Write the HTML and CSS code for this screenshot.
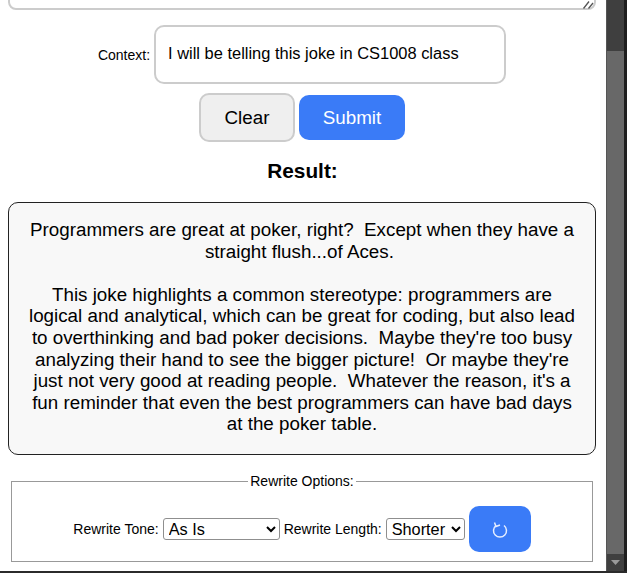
FILE: index.html
```html
<!DOCTYPE html>
<html lang="en">
<head>
<meta charset="utf-8">
<title>Joke Rewriter</title>
<link rel="stylesheet" href="styles.css">
</head>
<body>
<div class="window">
  <main class="page">
    <div class="prompt-wrap">
      <textarea class="prompt" aria-label="Prompt"></textarea>
      <svg class="grip" width="12" height="10" viewBox="0 0 12 10" aria-hidden="true"><path d="M1.500 9.500L7 2.500M6.500 9.500L11 4" fill="none" stroke="#555" stroke-width="1.300"/></svg>
    </div>
    <div class="context-row">
      <label class="label" for="ctx">Context:</label>
      <input id="ctx" class="context" type="text" value="I will be telling this joke in CS1008 class">
    </div>
    <div class="actions">
      <button class="btn btn-clear" type="button">Clear</button>
      <button class="btn btn-submit" type="button">Submit</button>
    </div>
    <h2 class="result-title">Result:</h2>
    <div class="result">Programmers are great at poker, right?  Except when they have a straight flush...of Aces. 

This joke highlights a common stereotype: programmers are logical and analytical, which can be great for coding, but also lead to overthinking and bad poker decisions.  Maybe they're too busy analyzing their hand to see the bigger picture!  Or maybe they're just not very good at reading people.  Whatever the reason, it's a fun reminder that even the best programmers can have bad days at the poker table.</div>
    <fieldset class="options">
      <legend class="legend">Rewrite Options:</legend>
      <div class="options-row">
        <label class="label" for="tone">Rewrite Tone:</label>
        <select id="tone" class="select tone"><option>As Is</option><option>More Formal</option></select>
        <label class="label" for="len">Rewrite Length:</label>
        <select id="len" class="select length"><option>Shorter</option><option>Longer</option></select>
        <button class="btn-redo" type="button" aria-label="Rewrite">
          <svg width="18" height="18" viewBox="0 0 18 18" aria-hidden="true"><path d="M5 5.500A6.500 6.500 0 1 0 13 5.500M3.500 2.500L5 6.500L9 5" fill="none" stroke="#e6eeff" stroke-width="1.500"/></svg>
        </button>
      </div>
    </fieldset>
  </main>
  <div class="scrollbar" aria-hidden="true">
    <div class="track"><div class="thumb"></div></div>
    <svg class="arrow" width="17" height="17" viewBox="0 0 17 17"><path d="M4 6h9l-4.500 5z" fill="#9a9a9a"/></svg>
  </div>
  <div class="edge"></div>
</div>
<div class="bottom-edge"></div>
</body>
</html>
```
FILE: styles.css
```css
* { box-sizing: border-box; }
html, body { margin: 0; height: 100%; overflow: hidden; background: #fff; }
body { display: flex; flex-direction: column; font-family: "Liberation Sans", Arial, sans-serif; color: #000; }
.window { flex: 1; min-height: 0; display: flex; }
.bottom-edge { height: 2px; background: #2b2b2b; }
.page { width: 606px; flex: none; overflow: hidden; display: flex; flex-direction: column; align-items: center; }
.prompt-wrap { position: relative; width: 588px; height: 60px; margin: -50px 0 0 -2px; flex: none; }
.prompt { display: block; width: 100%; height: 100%; border: 2px solid #ccc; border-radius: 8px; background: #fff; resize: none; }
.grip { position: absolute; right: 2px; bottom: 1px; }
.context-row { display: flex; align-items: center; gap: 4px; margin: 15px 0 0 -2px; }
.label { font-size: 14px; }
.context { width: 352px; height: 59px; padding: 0 12px 2px; border: 2px solid #ccc; border-radius: 10px; font: 16.45px "Liberation Sans", Arial, sans-serif; color: #000; background: #fff; }
.actions { display: flex; align-items: center; gap: 4px; margin: 9px 0 0 -2px; }
.btn { font: 18.8px "Liberation Sans", Arial, sans-serif; border-radius: 10px; cursor: pointer; }
.btn-clear { width: 96px; height: 49px; background: #efefef; border: 2px solid #ccc; color: #000; }
.btn-submit { width: 106px; height: 45px; background: #3a7bf7; border: 0; color: #fff; }
.result-title { font-size: 20.8px; line-height: 24px; font-weight: bold; margin: 17px 0 0 -1px; }
.result { width: 588px; height: 253px; margin: 19px 0 0 -2px; padding: 16px 16px; border: 1px solid #222; border-radius: 10px; background: #f8f8f8; font-size: 18.8px; line-height: 21.6px; text-align: center; white-space: pre-wrap; }
.options { width: 582px; height: 89px; margin: 18px 0 0 -2px; padding: 0 8px; border: 1px solid #999; flex: none; }
.legend { font-size: 14px; padding: 0 2px; margin: 0 auto; text-align: center; }
.options-row { display: flex; align-items: center; justify-content: center; gap: 4px; height: 46px; margin-top: 17px; }
.select { height: 22px; font: 16.3px "Liberation Sans", Arial, sans-serif; background: #fff; color: #000; border: 1px solid #8f8f8f; border-radius: 3px; padding: 0 0 0 1px; }
.tone { width: 117px; }
.length { width: 79px; }
.btn-redo { width: 62px; height: 46px; background: #3a7bf7; border: 0; border-radius: 10px; padding: 0; display: flex; align-items: center; justify-content: center; }
.scrollbar { width: 18px; flex: none; background: #3f3f3f; display: flex; flex-direction: column; border-left: 1px solid #555; }
.track { flex: 1; padding-top: 51px; display: flex; }
.thumb { flex: 1; background: #686868; }
.arrow { flex: none; }
.edge { flex: 1; background: #1e1e1e; }
```
